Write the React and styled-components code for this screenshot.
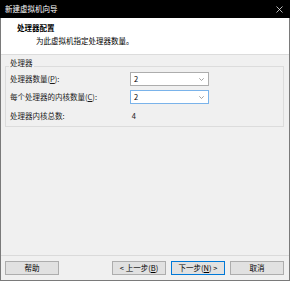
import React from 'react';
import styled, { createGlobalStyle } from 'styled-components';

const Global = createGlobalStyle`
    html, body { margin: 0; padding: 0; background: #ffffff; }
    body { font-family: "Noto Sans CJK SC", "Liberation Sans", sans-serif; }
`

const Window = styled.div`
    box-sizing: border-box;
    width: 290px;
    height: 281px;
    display: flex;
    flex-direction: column;
    background: #f0f0f0;
    border: 1px solid #7a7a7a;
    border-top: none;
    font-size: 7.5px;
    color: #1a1a1a;
`
const TitleBar = styled.div`
    height: 18px;
    margin: 0 -1px;
    background: #000000;
    color: #ffffff;
    display: flex;
    align-items: center;
    justify-content: space-between;
    padding: 0 7px 0 5px;
    line-height: 10px;
`
const Close = styled.svg`
    width: 7px;
    height: 7px;
`
const Header = styled.div`
    height: 37px;
    box-sizing: border-box;
    background: #ffffff;
    border-bottom: 1px solid #dcdcdc;
    padding: 5px 0 0 16px;
    display: flex;
    flex-direction: column;
    gap: 3px;
    line-height: 10px;
`
const HeaderTitle = styled.div`
    font-weight: 700;
    color: #000000;
`
const HeaderSub = styled.div`
    padding-left: 19px;
    color: #000000;
`
const Body = styled.div`
    flex: 1;
    padding: 11px 5px 0 4px;
`
const Group = styled.div`
    position: relative;
    border: 1px solid #dcdcdc;
    padding: 5px 4px 4px 4px;
    display: grid;
    grid-template-columns: 120px 79px;
    grid-auto-rows: 14px;
    row-gap: 4px;
    align-items: center;
`
const Legend = styled.span`
    position: absolute;
    top: -9px;
    left: 3px;
    padding: 0 1px;
    line-height: 10px;
    background: #f0f0f0;
`
const Label = styled.span`
    line-height: 10px;
    white-space: nowrap;
    margin-top: ${props => props.$shift || 0}px;
`
const Key = styled.span`
    text-decoration: underline;
`
const Combo = styled.div`
    box-sizing: border-box;
    height: 14px;
    background: #ffffff;
    border: 1px solid ${props => props.$focus ? '#7ab3ea' : '#adadad'};
    display: flex;
    align-items: center;
    justify-content: space-between;
    padding: 0 4px 0 3px;
    line-height: 10px;
    color: #000000;
`
const Chevron = styled.svg`
    width: 5px;
    height: 3px;
`
const Footer = styled.div`
    height: 25px;
    box-sizing: border-box;
    border-top: 1px solid #dadada;
    display: flex;
    align-items: center;
    padding: 0 5px 0 4px;
    gap: 5px;
`
const Button = styled.div`
    box-sizing: border-box;
    width: 54px;
    height: 14px;
    background: #e1e1e1;
    border: 1px solid ${props => props.$default ? '#0078d7' : '#adadad'};
    display: flex;
    align-items: center;
    justify-content: center;
    line-height: 10px;
    color: #000000;
`
const Spacer = styled.div`
    flex: 1;
`

const ComboBox = ({ value, focus }) => (
    <Combo $focus={focus}>
        <span>{value}</span>
        <Chevron viewBox="0 0 5 3">
            <path d="M0.3 0.3 L2.5 2.5 L4.7 0.3" fill="none" stroke="#8a8a8a" strokeWidth="0.8" />
        </Chevron>
    </Combo>
)

export default function App() {
    return (
        <>
            <Global />
            <Window>
                <TitleBar>
                    <span>新建虚拟机向导</span>
                    <Close viewBox="0 0 7 7">
                        <path d="M0.5 0.5 L6.5 6.5 M6.5 0.5 L0.5 6.5" stroke="#e8e8e8" strokeWidth="0.8" />
                    </Close>
                </TitleBar>
                <Header>
                    <HeaderTitle>处理器配置</HeaderTitle>
                    <HeaderSub>为此虚拟机指定处理器数量。</HeaderSub>
                </Header>
                <Body>
                    <Group>
                        <Legend>处理器</Legend>
                        <Label>处理器数量(<Key>P</Key>):</Label>
                        <ComboBox value="2" />
                        <Label>每个处理器的内核数量(<Key>C</Key>):</Label>
                        <ComboBox value="2" focus />
                        <Label $shift={2}>处理器内核总数:</Label>
                        <Label $shift={2}>&nbsp;4</Label>
                    </Group>
                </Body>
                <Footer>
                    <Button>帮助</Button>
                    <Spacer />
                    <Button>&lt; 上一步(<Key>B</Key>)</Button>
                    <Button $default>下一步(<Key>N</Key>) &gt;</Button>
                    <Button>取消</Button>
                </Footer>
            </Window>
        </>
    );
}
